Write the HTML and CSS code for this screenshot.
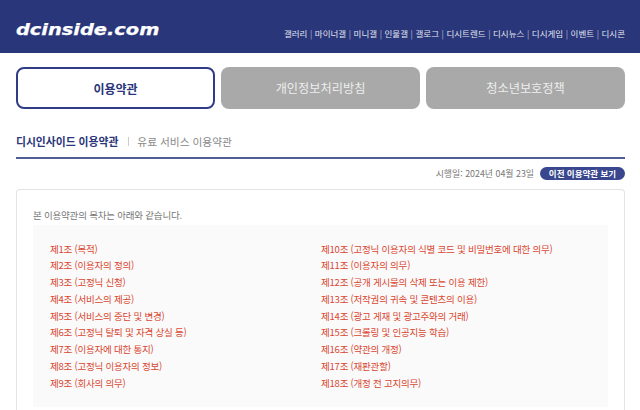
FILE: index.html
```html
<!DOCTYPE html>
<html lang="ko">
<head>
<meta charset="utf-8">
<title>이용약관</title>
<link rel="stylesheet" href="styles.css">
</head>
<body>
<header class="top">
  <div class="logo">dcinside.com</div>
  <nav class="gnb">
    <a>갤러리</a><i>|</i><a>마이너갤</a><i>|</i><a>미니갤</a><i>|</i><a>인물갤</a><i>|</i><a>갤로그</a><i>|</i><a>디시트렌드</a><i>|</i><a>디시뉴스</a><i>|</i><a>디시게임</a><i>|</i><a>이벤트</a><i>|</i><a>디시콘</a>
  </nav>
</header>
<main class="wrap">
  <div class="tabs">
    <div class="tab on">이용약관</div>
    <div class="tab">개인정보처리방침</div>
    <div class="tab">청소년보호정책</div>
  </div>
  <div class="subtabs">
    <span class="sub on">디시인사이드 이용약관</span><i class="sep"></i><span class="sub">유료 서비스 이용약관</span>
  </div>
  <div class="dateline">
    <span>시행일: 2024년 04월 23일</span><span class="pill">이전 이용약관 보기</span>
  </div>
  <section class="card">
    <p class="intro">본 이용약관의 목차는 아래와 같습니다.</p>
    <div class="toc">
      <ul>
        <li>제1조 (목적)</li>
        <li>제2조 (이용자의 정의)</li>
        <li>제3조 (고정닉 신청)</li>
        <li>제4조 (서비스의 제공)</li>
        <li>제5조 (서비스의 중단 및 변경)</li>
        <li>제6조 (고정닉 탈퇴 및 자격 상실 등)</li>
        <li>제7조 (이용자에 대한 통지)</li>
        <li>제8조 (고정닉 이용자의 정보)</li>
        <li>제9조 (회사의 의무)</li>
      </ul>
      <ul>
        <li>제10조 (고정닉 이용자의 식별 코드 및 비밀번호에 대한 의무)</li>
        <li>제11조 (이용자의 의무)</li>
        <li>제12조 (공개 게시물의 삭제 또는 이용 제한)</li>
        <li>제13조 (저작권의 귀속 및 콘텐츠의 이용)</li>
        <li>제14조 (광고 게재 및 광고주와의 거래)</li>
        <li>제15조 (크롤링 및 인공지능 학습)</li>
        <li>제16조 (약관의 개정)</li>
        <li>제17조 (재판관할)</li>
        <li>제18조 (개정 전 고지의무)</li>
      </ul>
    </div>
  </section>
</main>
</body>
</html>
```
FILE: styles.css
```css
* { box-sizing: border-box; }
html, body { margin: 0; padding: 0; height: 410px; overflow: hidden; }
body { background: #fff; font-family: "Noto Sans CJK KR", "Noto Sans", sans-serif; font-size: 10px; color: #666; }
i { font-style: normal; }
ul { list-style: none; margin: 0; padding: 0; }
.top { height: 53px; background: #29367a; padding: 0 15px 0 16px; display: flex; justify-content: space-between; align-items: flex-end; }
.logo { font-family: "DejaVu Sans", sans-serif; font-weight: 700; font-style: italic; font-size: 15.5px; line-height: 20px; color: #fff; margin-bottom: 13px; transform: scaleX(1.25); transform-origin: left center; -webkit-text-stroke: 0.25px #fff; }
.gnb { display: flex; align-items: center; color: #e4e6f0; font-size: 8.5px; line-height: 12px; margin-bottom: 14.5px; }
.gnb i { margin: 0 2.6px; opacity: .7; }
.wrap { padding: 14px 15px 0 16px; }
.tabs { display: grid; grid-template-columns: repeat(3, 1fr); gap: 6px; }
.tab { height: 42px; border-radius: 8px; background: #a8a9a8; color: #eee; font-size: 12.2px; display: flex; align-items: center; justify-content: center; }
.tab.on { background: #fff; border: 2px solid #2f3c86; color: #29367a; font-weight: 700; font-size: 12px; }
.subtabs { display: flex; align-items: center; height: 50px; padding-top: 16px; border-bottom: 2px solid #4f5c96; font-size: 10.7px; color: #888; }
.sub.on { color: #29367a; font-weight: 700; font-size: 10.8px; }
.sep { width: 1px; height: 9px; background: #ccc; margin: 0 8px 0 10px; }
.dateline { display: flex; justify-content: flex-end; align-items: center; gap: 6px; height: 30px; padding-bottom: 2px; color: #777; font-size: 8.9px; }
.pill { background: #3a478f; color: #fff; height: 13px; line-height: 13px; width: 85px; text-align: center; border-radius: 7px; font-size: 8.5px; font-weight: 700; }
.card { border: 1px solid #e4e4e4; border-bottom: 0; border-radius: 4px 4px 0 0; padding: 18px 16px 0; height: 240px; }
.intro { margin: 0; line-height: 15px; color: #777; font-size: 9.5px; letter-spacing: -0.2px; height: 17px; }
.toc { background: #fafafa; display: flex; height: 182px; padding: 15.5px 0 0 17px; }
.toc ul:first-child { width: 271px; }
.toc li { height: 16.8px; line-height: 16.8px; color: #d9462f; font-size: 9.5px; letter-spacing: -0.22px; white-space: nowrap; }
```
